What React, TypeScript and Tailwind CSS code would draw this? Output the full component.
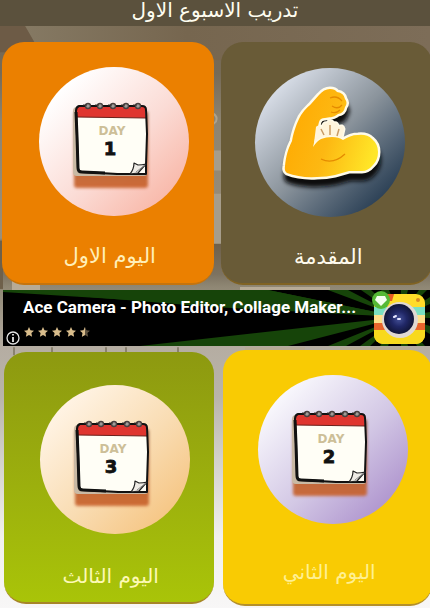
import React from "react";

const arabic = "font-['DejaVu_Sans','Noto_Sans',sans-serif]";

function Backdrop() {
  return (
    <svg className="absolute inset-0 h-full w-full" viewBox="0 0 430 608" preserveAspectRatio="none" aria-hidden="true">
      <defs>
        <linearGradient id="wall" x1="0" y1="0" x2="0" y2="1">
          <stop offset="0" stopColor="#75664f" />
          <stop offset=".12" stopColor="#766b57" />
          <stop offset=".2" stopColor="#8d8471" />
          <stop offset=".39" stopColor="#9b8f7a" />
          <stop offset=".4" stopColor="#6e604a" />
          <stop offset=".45" stopColor="#7d7361" />
          <stop offset=".47" stopColor="#8f8774" />
          <stop offset=".57" stopColor="#b5ada2" />
          <stop offset=".65" stopColor="#b9b4aa" />
          <stop offset=".75" stopColor="#d2d0ca" />
          <stop offset=".88" stopColor="#f1f0ee" />
          <stop offset="1" stopColor="#f8f7f7" />
        </linearGradient>
        <linearGradient id="beam" x1="0" y1="0" x2="1" y2="0">
          <stop offset="0" stopColor="#857963" />
          <stop offset=".4" stopColor="#76664f" />
          <stop offset="1" stopColor="#7d6d58" />
        </linearGradient>
      </defs>
      <rect width="430" height="608" fill="url(#wall)" />
      <path d="M25 26H430V60H45Z" fill="url(#beam)" />
      <path d="M0 26H25L40 52H0Z" fill="#6d5b46" />
      <path d="M0 240h3v48H0z" fill="#6e604a" />
      <path d="M213 150h8v20h-8zM213 193h8v50h-8z" fill="#a69d8b" />
      <path d="M213 113q5 3 3 8l-3 3" fill="none" stroke="#aca28e" strokeWidth="2" />
      <path d="M12 280h28v10H12zM240 286h90v4h-90zM245 346h60v5h-60zM340 346h70v5h-70z" fill="#b7ab96" />
      <path d="M14 346v8M52 346v8M106 346v8M126 346v8M178 346v8" stroke="#8a8270" strokeWidth="2" />
    </svg>
  );
}

function Calendar({ day, id }: { day: number; id: string }) {
  return (
    <svg className="h-full w-full" viewBox="0 0 150 149" role="img" aria-label={`Day ${day}`}>
      <defs>
        <filter id={`${id}-soft`} x="-20%" y="-20%" width="140%" height="140%">
          <feGaussianBlur stdDeviation="1.6" />
        </filter>
        <linearGradient id={`${id}-base`} x1="0" y1="0" x2="0" y2="1">
          <stop offset="0" stopColor="#8a4a2a" />
          <stop offset="1" stopColor="#c9622a" />
        </linearGradient>
      </defs>
      <rect x="35" y="44" width="74" height="77" rx="3" fill={`url(#${id}-base)`} opacity=".9" filter={`url(#${id}-soft)`} />
      <path d="M34 44q0-4 4-4h67q3 0 3 3v63q0 3-3 3H38q-4 0-4-4Z" fill="#c9b9a4" />
      <path d="M37 43q0-4 4-4h63q3 0 3 3l1 22-1 43-27-1-39-1q-3 0-3-4Z" fill="#fffef6" />
      <path d="M38 39h68l1 12-69-1Z" fill="#df352f" />
      <path d="M38 50l69 1" stroke="#6b211c" strokeWidth="1.2" />
      <path d="M40 39q-3 1-3 5l1 25 1 32q0 4 4 4l35 2 29 0 0-10 1-30-1-24q0-4-4-4Z" fill="none" stroke="#111" strokeWidth="2" strokeLinejoin="round" />
      <path d="M37 45l1 24 1 32q0 4 4 4l23 1" fill="none" stroke="#111" strokeWidth="3" />
      <path d="M91 107q4-5 4-11l4 2q4 0 8-1l-8 9Z" fill="#eeebe5" stroke="#222" strokeWidth="1.2" strokeLinejoin="round" />
      <path d="M97 105l9-7" stroke="#888" strokeWidth="1" />
      {[49, 61, 74, 87, 99].map((x) => (
        <g key={x}>
          <circle cx={x} cy="39" r="2.500" fill="#a19c99" stroke="#4a4140" strokeWidth="1.400" />
          <path d={`M${x - 5} 38h4`} stroke="#393231" strokeWidth="1" />
        </g>
      ))}
      <text x="73" y="68" textAnchor="middle" fontSize="12" fontWeight="700" fill="#cdbf98" fontFamily="DejaVu Sans">DAY</text>
      <text x="71" y="88" textAnchor="middle" fontSize="18" fontWeight="700" fill="#111" stroke="#111" strokeWidth=".8" fontFamily="DejaVu Sans">{day}</text>
    </svg>
  );
}

function Muscle() {
  const arm = "M32 105Q29 103 30 98C31 88 33 81 37 73C39 62 42 55 45 49C49 42 53 39 56 36L64 27Q69 21 75 21Q80 21 82 24Q89 25 90 31Q93 35 90 39Q89 45 83 46C78 50 74 49 70 50Q65 50 64 54L58 79Q62 73 66 71Q71 69 77 69Q84 69 88 72C93 69 97 67 103 67Q112 66 117 71Q123 76 123 84Q123 92 118 97Q113 103 107 103L94 103Q87 105 80 107Q72 109 62 109Q45 110 32 105Z";
  const burst = "M59 75L61 59Q63 56 67 60Q68 54 72 55Q75 50 79 55Q83 54 83 59Q88 56 89 61L87 70Q83 68 78 68Q65 67 59 75Z";
  return (
    <svg className="h-full w-full" viewBox="0 0 150 149" role="img" aria-label="عضلة">
      <defs>
        <linearGradient id="skin" x1="0" y1=".3" x2="1" y2=".6">
          <stop offset="0" stopColor="#ffa900" />
          <stop offset=".5" stopColor="#fdb812" />
          <stop offset="1" stopColor="#ffe628" />
        </linearGradient>
        <filter id="armShade" x="-20%" y="-20%" width="140%" height="150%">
          <feGaussianBlur stdDeviation="2" />
        </filter>
      </defs>
      <path d={arm} transform="translate(1 8)" fill="#080b10" stroke="#080b10" strokeWidth="4" filter="url(#armShade)" />
      <path d={arm} fill="#fffbe9" stroke="#fffbe9" strokeWidth="5" strokeLinejoin="round" />
      <path d={burst} fill="#fffbe9" stroke="#fffbe9" strokeWidth="3" strokeLinejoin="round" />
      <path d={arm} fill="url(#skin)" />
      <path d={burst} fill="#fff5dc" />
      <path d="M66 61l3 6M75 57v10M84 61l-2 7" stroke="#c99b65" strokeWidth="1.500" />
      <path d="M66 91q12 6 24-5M75 30q7-3 12 3M77 38q6 4 10-1M76 44q5 2 9-2" fill="none" stroke="#e58b00" strokeWidth="1.300" />
    </svg>
  );
}

function AppIcon() {
  return (
    <svg className="h-[54px] w-[54px] shrink-0" viewBox="0 0 54 54" role="img" aria-label="Ace Camera">
      <defs>
        <clipPath id="appShape"><rect x="2" y="3" width="51" height="50" rx="9" /></clipPath>
        <radialGradient id="lens"><stop offset="0" stopColor="#465299" /><stop offset=".5" stopColor="#202766" /><stop offset="1" stopColor="#111536" /></radialGradient>
      </defs>
      <g clipPath="url(#appShape)">
        <rect width="54" height="54" fill="#ffdc29" />
        <path d="M0 16h54v8H0z" fill="#7be0c1" />
        <path d="M0 24h54v8H0z" fill="#ffe08a" />
        <path d="M0 32h54v7H0z" fill="#e9652c" />
        <path d="M0 39h54v15H0z" fill="#f8d91d" />
        <path d="M15 0h8l-3 10h-6z" fill="#e65b23" />
      </g>
      <circle cx="46" cy="9" r="2" fill="#d98a24" />
      <circle cx="28" cy="29" r="18" fill="#e0d8d2" />
      <circle cx="27" cy="28" r="15" fill="url(#lens)" />
      <path d="M22 26l2-1M26 28l2 0" stroke="#e6e7ff" strokeWidth="2" strokeLinecap="round" />
      <circle cx="9" cy="9" r="9" fill="#55b936" />
      <path d="M5 5h8l2 4-6 6-6-6z" fill="#f4fff0" />
    </svg>
  );
}

function Star({ half = false }: { half?: boolean }) {
  const d = "M5 0l1.500 3.300 3.500.400-2.600 2.400.700 3.600L5 8 1.900 9.700l.700-3.600L0 3.700l3.500-.400Z";
  return (
    <svg className="h-[10px] w-[10px]" viewBox="0 0 10 10">
      <path d={d} fill={half ? "#5f5341" : "#d9bd8c"} />
      {half && <path d="M5 0v8L1.900 9.700l.700-3.600L0 3.700l3.500-.400Z" fill="#d9bd8c" />}
    </svg>
  );
}

function Ad() {
  return (
    <a href="#ad" className="relative ml-[3px] flex h-[56px] items-center overflow-hidden bg-black text-white">
      <svg className="absolute inset-0 h-full w-full" viewBox="0 0 427 56" preserveAspectRatio="none" aria-hidden="true">
        <path d="M0 0H265L397 27L0 2ZM397 27L137 56H285ZM397 27L325 0h20ZM397 27L358 0h10ZM397 27L378 0h8ZM397 27L398 0h7ZM397 27L416 0h8ZM397 27L427 7v7ZM397 27L427 22v6ZM397 27L427 36v8ZM397 27L325 56h18ZM397 27L357 56h10ZM397 27L377 56h8ZM397 27L398 56h7ZM397 27L414 56h8Z" fill="#164409" />
        <path d="M0 0H265L397 27L210 17Z" fill="#164409" />
      </svg>
      <svg className="absolute bottom-0 left-[3px] h-[15px] w-[15px]" viewBox="0 0 15 15" aria-label="Ad info">
        <circle cx="7" cy="7" r="6" fill="#000" stroke="#e5e5e5" strokeWidth="1.300" />
        <path d="M7 6v5M7 3v1.500" stroke="#fff" strokeWidth="1.600" />
      </svg>
      <div className="relative flex h-full min-w-0 flex-1 flex-col gap-2 pt-[5px] pl-5">
        <span className="truncate font-['Roboto',sans-serif] text-[17px] leading-6 font-bold">Ace Camera - Photo Editor, Collage Maker...</span>
        <span className="flex gap-1 pl-px" role="img" aria-label="4.5 stars">
          <Star /><Star /><Star /><Star /><Star half />
        </span>
      </div>
      <div className="relative mr-1"><AppIcon /></div>
    </a>
  );
}

type CardProps = { title: string; card: string; disc: string; label: string; children: React.ReactNode };

function Card({ title, card, disc, label, children }: CardProps) {
  return (
    <button type="button" className={`flex w-full flex-col items-center rounded-[22px] border-b-2 ${card}`}>
      <span className={`block h-[149px] w-[150px] overflow-hidden rounded-full ${disc}`}>{children}</span>
      <span dir="rtl" className={`${arabic} leading-7 ${label}`}>{title}</span>
    </button>
  );
}

export default function App() {
  return (
    <div className="relative overflow-hidden">
      <Backdrop />
      <div className="relative">
        <header className="h-[26px] bg-[#5b513d]">
          <h1 dir="rtl" className={`${arabic} text-center text-[20px] leading-5 text-[#fffdf0]`}>تدريب الاسبوع الاول</h1>
        </header>
        <main>
          <div className="-mr-0.5 grid grid-cols-2 gap-[7px] pt-4 pl-0.5">
            <Card title="اليوم الاول" card="bg-[#eb8000] pt-[25px] pb-3 pl-3 border-[#c5740d]" disc="bg-linear-to-br from-white from-15% via-[#fbdcd6] via-55% to-[#f6aa98]" label="mt-[26px] pr-2 text-[21px] text-[#ffefb8]">
              <Calendar day={1} id="one" />
            </Card>
            <Card title="المقدمة" card="bg-[#695b37] pt-[26px] pb-3 pl-2 border-[#806323]" disc="bg-linear-to-br from-[#e0e5ef] from-10% via-[#8b949c] via-50% to-[#23394f] to-90%" label="mt-[26px] pr-1 text-[21px] text-[#fffbed]">
              <Muscle />
            </Card>
          </div>
          <div className="pt-[5px]"><Ad /></div>
          <div className="-mr-0.5 grid grid-cols-2 items-start gap-[9px] pt-1 pb-1 pl-1">
            <Card title="اليوم الثالث" card="mt-0.5 bg-linear-to-b from-[#8d9910] to-[#a9c408] pt-[33px] pb-3 pl-3 border-[#a78528]" disc="bg-linear-to-br from-[#fff3e3] from-15% via-[#f9dcb2] via-55% to-[#f4bd70]" label="mt-7 pr-2 text-[20px] text-[#fdf9b5]">
              <Calendar day={3} id="three" />
            </Card>
            <Card title="اليوم الثاني" card="bg-[#f9cb03] pt-[25px] pb-[18px] pl-3 border-[#b4902a]" disc="bg-linear-to-br from-[#f8f7fc] from-15% via-[#d3c8e5] via-55% to-[#a282c5]" label="mt-[34px] pr-2 text-[20px] text-[#fff092]">
              <Calendar day={2} id="two" />
            </Card>
          </div>
        </main>
      </div>
    </div>
  );
}
